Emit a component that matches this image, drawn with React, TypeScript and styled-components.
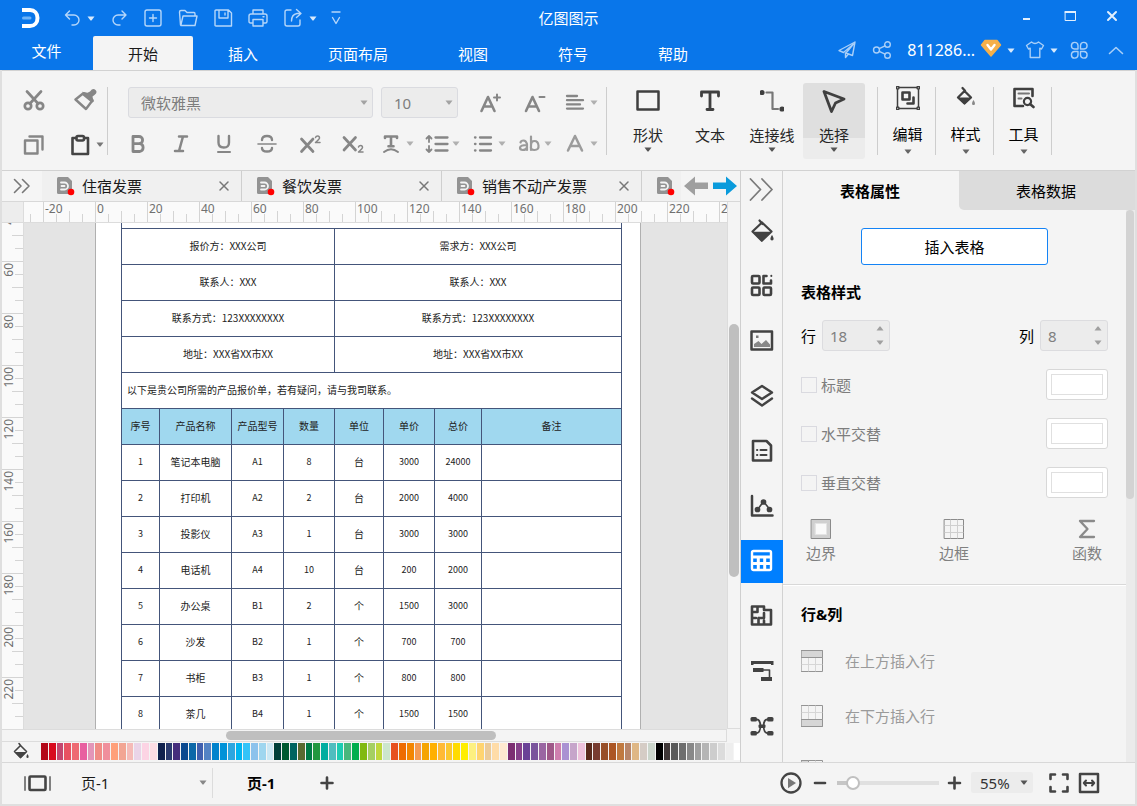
import React from "react";
import styled, { createGlobalStyle, css } from "styled-components";

const GlobalStyle = createGlobalStyle`
  * { box-sizing: border-box; }
  body {
    margin: 0;
    font-family: "Noto Sans", "Noto Sans CJK SC", sans-serif;
    font-size: 15px;
    line-height: 20px;
    color: #1a1a1a;
    background: #f4f4f4;
  }
  button, input, select { font: inherit; color: inherit; margin: 0; }
  button { border: 0; padding: 0; background: none; cursor: pointer; }
`;

/* ---------- icons ---------- */

const Svg = styled.svg<{ $w?: number }>`
  flex: none;
  display: block;
  fill: none;
  stroke: currentColor;
  stroke-width: ${(p) => p.$w ?? 1.4};
  stroke-linecap: round;
  stroke-linejoin: round;
`;

type IconProps = { size?: number; w?: number; children: React.ReactNode };
const Icon = ({ size = 24, w, children }: IconProps) => (
  <Svg width={size} height={size} viewBox={`0 0 ${size} ${size}`} $w={w} aria-hidden="true">
    {children}
  </Svg>
);

const CaretSvg = styled.svg<{ $color?: string }>`
  flex: none;
  display: block;
  fill: ${(p) => p.$color ?? "currentColor"};
  pointer-events: none;
`;
const Caret = ({ color, up }: { color?: string; up?: boolean }) => (
  <CaretSvg width="8" height="5" viewBox="0 0 8 5" $color={color} aria-hidden="true">
    <path d={up ? "M0.5 4.5 L3.5 0.5 H4.5 L7.5 4.5Z" : "M0.5 0.5 H7.5 L4.5 4.5 H3.5Z"} />
  </CaretSvg>
);

const Solid = (props: React.SVGProps<SVGPathElement>) => <path fill="currentColor" stroke="none" {...props} />;

const BucketIcon = () => (
  <Icon w={2.2}>
    <path d="M9.500 1.500 L12.500 5 M12 3.500 L21.500 12.500 L11.800 21.800 L2.500 12.500 L12 3.500" />
    <Solid d="M2.500 12.800 H21.500 L11.800 22.500Z" />
    <Solid d="M22 16 c2.200 3.200 2 5.400 0 5.400 s-2.200 -2.200 0 -5.400Z" />
  </Icon>
);

/* ---------- header ---------- */

const Shell = styled.div`
  height: 100vh;
  min-height: 480px;
  display: flex;
  flex-direction: column;
  overflow: hidden;
  background: #f4f4f4;
`;

const Header = styled.header`
  flex: none;
  background: #0976ea;
  color: #cfe4fb;
`;

const TitleBar = styled.div`
  display: grid;
  grid-template-columns: 1fr auto 1fr;
  align-items: center;
  height: 36px;
`;

const QuickTools = styled.div`
  display: flex;
  align-items: center;
  padding-left: 20px;
`;

const QuickButton = styled.button<{ $gap?: number }>`
  display: flex;
  align-items: center;
  gap: 6px;
  margin-left: ${(p) => p.$gap ?? 15}px;
  color: #b5d6fa;
`;

const AppTitle = styled.h1`
  margin: 0;
  font-size: 15px;
  font-weight: 400;
  color: #fff;
`;

const WindowControls = styled.div`
  display: flex;
  justify-content: flex-end;
  padding: 0 4px 4px 0;
`;

const WindowButton = styled.button`
  display: flex;
  justify-content: center;
  width: 43px;
  color: #e2effd;
`;

const MenuRow = styled.nav`
  display: flex;
  height: 34px;
`;

const FileButton = styled.button`
  width: 93px;
  padding-bottom: 5px;
  color: #fff;
`;

const MenuTab = styled.button<{ $active?: boolean }>`
  padding: 2px 35px 0;
  border-radius: 2px 2px 0 0;
  white-space: nowrap;
  color: ${(p) => (p.$active ? "#1a1a1a" : "#fff")};
  background: ${(p) => (p.$active ? "#f4f4f4" : "none")};
`;

const Account = styled.div`
  display: flex;
  align-items: center;
  margin-left: auto;
  padding: 0 12px 6px 0;
`;

const AccountButton = styled.button<{ $gap?: number }>`
  display: flex;
  align-items: center;
  gap: 5px;
  margin-left: ${(p) => p.$gap ?? 15}px;
  color: #a9cff8;
`;

const UserName = styled.span`
  color: #fff;
  font-size: 16px;
`;

const HeaderBar = () => (
  <Header>
    <TitleBar>
      <QuickTools>
        <Svg width="21" height="22" viewBox="0 0 21 22" aria-hidden="true">
          <path d="M2 3 H10 C14.5 3 17.500 6.500 17.500 11 S14.500 19 10 19 H2" stroke="#fff" strokeWidth="4" strokeLinecap="butt" />
          <path d="M3.500 11 H10" stroke="#6fb3f7" strokeWidth="3" />
        </Svg>
        <QuickButton $gap={22} aria-label="撤销">
          <Icon size={18}><path d="M6.500 2 L2.500 6 L6.500 10 M2.500 6 H11 A5 5 0 0 1 11 16 H9" /></Icon>
          <Caret color="#d8e9fc" />
        </QuickButton>
        <QuickButton aria-label="重做">
          <Icon size={18}><path d="M12 2 L16 6 L12 10 M16 6 H8 A5 5 0 0 0 8 16 H10" /></Icon>
        </QuickButton>
        <QuickButton aria-label="新建">
          <Icon size={20}><rect x="2" y="2" width="16" height="16" rx="2" /><path d="M10 6.500 V13.500 M6.500 10 H13.500" /></Icon>
        </QuickButton>
        <QuickButton aria-label="打开">
          <Icon size={20}><path d="M2.500 17 L1.500 4 Q1.500 2.500 3 2.500 H7 L9 4.500 H16 Q17 4.500 17 6 V8 M2.800 17.500 L5 8 H19 L17 17.500Z" /></Icon>
        </QuickButton>
        <QuickButton aria-label="保存">
          <Icon size={20}><path d="M3 2 H15.500 L18.500 5 V18 H3 Q2 18 2 17 V3 Q2 2 3 2Z M6 2.500 V10 H15 V2.500 M12 5 V7" /></Icon>
        </QuickButton>
        <QuickButton aria-label="打印">
          <Icon size={20}><path d="M5 6 V2 H15 V6 M5 15 H2.500 Q1 15 1 13.500 V8 Q1 6 3 6 H17 Q19 6 19 8 V13.500 Q19 15 17.500 15 H15 M5 11.500 H15 V18 H5Z M15 8.800 H16" /></Icon>
        </QuickButton>
        <QuickButton aria-label="导出">
          <Icon size={20}><path d="M8 2 H4 Q2 2 2 4 V16 Q2 18 4 18 H15 Q17 18 17 16 V12 M13.500 1.500 L18 5.500 L13.500 9.500 M18 5.500 H14 Q8.500 6.500 8.500 13" /></Icon>
          <Caret color="#d8e9fc" />
        </QuickButton>
        <QuickButton $gap={11} aria-label="自定义">
          <Icon size={16}><path d="M4 2 H12 M4.500 7.500 L8 13.500 L11.500 7.500" /></Icon>
        </QuickButton>
      </QuickTools>
      <AppTitle>亿图图示</AppTitle>
      <WindowControls>
        <WindowButton aria-label="最小化"><Icon size={14} w={2}><path d="M4 10 H11" strokeLinecap="butt" /></Icon></WindowButton>
        <WindowButton aria-label="最大化"><Icon size={14} w={1}><rect x="3.500" y="2.500" width="10" height="9" /><path d="M3.500 3 H13.500" strokeWidth="2" /></Icon></WindowButton>
        <WindowButton aria-label="关闭"><Icon size={14} w={2}><path d="M3 3 L11 11 M11 3 L3 11" /></Icon></WindowButton>
      </WindowControls>
    </TitleBar>
    <MenuRow>
      <FileButton>文件</FileButton>
      {["开始", "插入", "页面布局", "视图", "符号", "帮助"].map((t) => (
        <MenuTab key={t} $active={t === "开始"}>{t}</MenuTab>
      ))}
      <Account>
        <AccountButton aria-label="发送"><Icon size={20}><path d="M18 2 L2 10.500 L6.500 12.500 L16.500 4 L9 13 L15.500 15.500 L18 2 M8.500 13 V17.500 L11 14.500" /></Icon></AccountButton>
        <AccountButton aria-label="分享"><Icon size={20}><circle cx="4.500" cy="10" r="3" /><circle cx="15.500" cy="4.500" r="2.800" /><circle cx="15.500" cy="15.500" r="2.800" /><path d="M7.200 8.700 L13 5.800 M7.200 11.300 L13 14.200" /></Icon></AccountButton>
        <AccountButton>
          <UserName>811286...</UserName>
          <Svg width="22" height="24" viewBox="0 0 22 24" aria-hidden="true">
            <path d="M5 2.500 H17 L20.500 7 L11 18 L1.500 7Z" fill="#f5b04a" stroke="#f5b04a" />
            <path d="M7.500 7 L11 11.500 L14.500 7" stroke="#fff" strokeWidth="2.400" />
          </Svg>
          <Caret color="#d8e9fc" />
        </AccountButton>
        <AccountButton $gap={10} aria-label="皮肤">
          <Icon size={20}><path d="M6.500 2 Q10 5 13.500 2 L18.500 5.500 L16.500 9 L14.800 8.200 V17.500 H5.200 V8.200 L3.500 9 L1.500 5.500Z" /></Icon>
          <Caret color="#d8e9fc" />
        </AccountButton>
        <AccountButton $gap={12} aria-label="应用"><Icon size={18}><path d="M8 8 H4.500 A3.300 3.300 0 1 1 8 4.500Z M10.500 8 V4.500 A3.300 3.300 0 1 1 14 8Z M8 10.500 V14 A3.300 3.300 0 1 1 4.500 10.500Z M10.500 10.500 H14 A3.300 3.300 0 1 1 10.500 14Z" /></Icon></AccountButton>
        <AccountButton $gap={19} aria-label="收起"><Icon size={18} w={1.6}><path d="M2.500 12.500 L9 6.500 L15.500 12.500" /></Icon></AccountButton>
      </Account>
    </MenuRow>
  </Header>
);

/* ---------- ribbon ---------- */

const Frame = styled.div`
  flex: 1;
  min-height: 0;
  display: flex;
  flex-direction: column;
  border: solid #dfdfdf;
  border-width: 0 2px 2px;
`;

const Ribbon = styled.section`
  flex: none;
  display: flex;
  height: 101px;
  border: solid #d2d2d2;
  border-width: 1px 0;
`;

const Separator = styled.div`
  flex: none;
  align-self: flex-start;
  width: 1px;
  height: 68px;
  margin-top: 16px;
  background: #cdcdcd;
`;

const ClipboardGroup = styled.div`
  display: grid;
  grid-template-columns: 63px 42px;
  grid-auto-rows: 45px;
  padding-top: 6px;
  align-items: center;
`;

const ToolButton = styled.button<{ $strong?: boolean }>`
  display: flex;
  align-items: center;
  justify-content: center;
  gap: 3px;
  color: ${(p) => (p.$strong ? "#444" : "#868686")};
`;

const FontGroup = styled.div`
  display: flex;
  flex-direction: column;
  padding: 11px 8px 0;
`;

const FontRow = styled.div<{ $inset?: number }>`
  display: flex;
  align-items: center;
  height: 41px;
  padding-left: ${(p) => p.$inset ?? 0}px;
`;

const GlyphButton = styled(ToolButton)<{ $width?: number }>`
  width: ${(p) => p.$width ?? 43}px;
`;

const SplitButton = styled(ToolButton)<{ $width?: number }>`
  width: ${(p) => p.$width ?? 46}px;
  justify-content: flex-end;
`;

const SelectBox = styled.div<{ $width: number }>`
  flex: none;
  display: grid;
  grid-template-columns: 1fr 13px;
  align-items: center;
  width: ${(p) => p.$width}px;
  & > * { grid-row: 1; }
  & > svg { grid-column: 2; }
`;

const Select = styled.select<{ $plain?: boolean }>`
  grid-column: 1 / 3;
  appearance: none;
  width: 100%;
  height: 31px;
  padding: 0 12px;
  outline: none;
  border: 1px solid #dadbe0;
  border-radius: 3px;
  background: #ececec;
  color: #7d7d7d;
  ${(p) => p.$plain && css`
    border: 0;
    background: none;
    color: #1a1a1a;
  `}
`;

const BigButton = styled.button<{ $active?: boolean }>`
  display: flex;
  flex-direction: column;
  align-items: center;
  align-self: flex-start;
  width: 62px;
  height: 76px;
  margin-top: 12px;
  padding-top: 6px;
  border-radius: 3px;
  color: #3f3f3f;
  background: ${(p) => (p.$active ? "linear-gradient(#dfdfdf 55px, #ececec 55px)" : "none")};
`;

const BigLabel = styled.span`
  margin: 10px 0 0;
  line-height: 24px;
  white-space: nowrap;
  color: #262626;
`;

const BigTools = styled.div`
  display: flex;
  padding: 0 12px 0 10px;
`;

const MenuButton = styled.button`
  display: flex;
  flex-direction: column;
  align-items: center;
  align-self: flex-start;
  width: 57px;
  margin-top: 15px;
  padding-left: 2px;
  color: #3f3f3f;
`;

const MenuLabel = styled.span`
  margin: 12px 0 3px;
  line-height: 24px;
  color: #000;
`;

const RibbonBar = () => (
  <Ribbon>
    <ClipboardGroup>
      <ToolButton aria-label="剪切">
        <Icon w={2.700}><circle cx="6" cy="18" r="3.200" /><circle cx="18" cy="18" r="3.200" /><path d="M5 3.500 L16 15.500 M19 3.500 L8 15.500" /></Icon>
      </ToolButton>
      <ToolButton aria-label="格式刷">
        <Icon w={2.400}>
          <Solid d="M16 3.500 Q19 -0.500 21.500 2 T20.500 7 L18.500 8.500 L19.500 14 L8 3.800 L13.500 4.800Z" />
          <path d="M9 5.500 L1.500 11.500 L12 21 L18 13" /><path d="M10 6 L18 12.500" strokeWidth="3.600" />
        </Icon>
      </ToolButton>
      <ToolButton aria-label="复制">
        <Icon w={2.400}><rect x="3" y="7.500" width="12.500" height="13" /><path d="M7.500 3.500 H20.500 V16.500" /></Icon>
      </ToolButton>
      <ToolButton $strong aria-label="粘贴">
        <Icon w={2.600}><path d="M7 5 H3.500 V21 H19 V5 H16" /><rect x="7.500" y="3" width="7.500" height="4.500" rx="1.500" /></Icon>
        <Caret color="#777" />
      </ToolButton>
    </ClipboardGroup>
    <Separator />
    <FontGroup>
      <FontRow $inset={12}>
        <SelectBox $width={245}>
          <Select aria-label="字体"><option>微软雅黑</option></Select>
          <Caret color="#a3a3a3" />
        </SelectBox>
        <FontRow $inset={8}>
          <SelectBox $width={77}>
            <Select aria-label="字号"><option>10</option></Select>
            <Caret color="#a3a3a3" />
          </SelectBox>
        </FontRow>
        <FontRow $inset={10}>
          <GlyphButton $width={44} aria-label="增大字号"><Icon w={2.600}><path d="M3.500 20 L10 6 L16.500 20 M6 15.500 H14" /><path strokeWidth="2" d="M16 6.500 H22 M19 3.500 V9.500" /></Icon></GlyphButton>
          <GlyphButton $width={44} aria-label="减小字号"><Icon w={2.600}><path d="M4 20 L10.500 6 L17 20 M6.500 15.500 H14.500" /><path strokeWidth="2" d="M17.500 6 H22.500" /></Icon></GlyphButton>
          <SplitButton $width={42} aria-label="对齐"><Icon w={2.300}><path d="M4 5 H14 M4 9.200 H20 M4 13.400 H17 M4 17.600 H20" /></Icon><Caret color="#b0b0b0" /></SplitButton>
        </FontRow>
      </FontRow>
      <FontRow>
        <GlyphButton aria-label="加粗"><Icon w={2.800}><path d="M7 4.500 H13 A3.600 3.600 0 0 1 13 11.700 H7 M7 11.700 H14 A4 4 0 0 1 14 19.500 H7 V4.500" /></Icon></GlyphButton>
        <GlyphButton aria-label="斜体"><Icon w={2.500}><path d="M10 4.500 H18 M6 19 H14 M14 4.500 L10 19" /></Icon></GlyphButton>
        <GlyphButton aria-label="下划线"><Icon w={2.400}><path d="M6.500 4 V10.500 Q6.500 15.500 11.800 15.500 T17 10.500 V4" /><path strokeWidth="2" d="M6 20 H18" /></Icon></GlyphButton>
        <GlyphButton aria-label="删除线"><Icon w={2.400}><path d="M17 8 Q17 4 12 4 T7 8 M7 16 Q7 19.500 12 19.500 T17 16" /><path strokeWidth="1.600" d="M3 12 H21" /></Icon></GlyphButton>
        <GlyphButton aria-label="上标"><Icon w={2.700}><path d="M3.500 7 L15 19.500 M15 7 L3.500 19.500" /><path strokeWidth="1.500" d="M17.500 5.500 Q18 4 19.700 4 T21.500 6 Q21.500 7 17.500 10.500 H22" /></Icon></GlyphButton>
        <GlyphButton aria-label="下标"><Icon w={2.700}><path d="M3 5.500 L14.500 18 M14.500 5.500 L3 18" /><path strokeWidth="1.500" d="M17.500 15 Q18 13.500 19.700 13.500 T21.500 15.500 Q21.500 16.500 17.500 20 H22" /></Icon></GlyphButton>
        <SplitButton $width={40} aria-label="文字方向"><Icon w={2.600}><path d="M6 6 V4.500 H18 V6 M12 4.500 V14 M9.500 14.300 H14.500" /><path d="M5 20 Q12 14.500 19 20" strokeWidth="2" /></Icon><Caret color="#b0b0b0" /></SplitButton>
        <SplitButton aria-label="行距"><Icon w={2.300}><path d="M10.500 5.500 H22.500 M10.500 12 H22.500 M10.500 18.500 H22.500" /><path strokeWidth="1.800" d="M4 4 V10 M1.500 6.500 L4 4 L6.500 6.500 M4 14 V20 M1.500 17.500 L4 20 L6.500 17.500" /></Icon><Caret color="#b0b0b0" /></SplitButton>
        <SplitButton aria-label="列表"><Icon w={2.300}><path d="M9 5.500 H20 M9 12 H20 M9 18.500 H20 M4 5.500 H4.500 M4 12 H4.500 M4 18.500 H4.500" /></Icon><Caret color="#b0b0b0" /></SplitButton>
        <SplitButton aria-label="大小写"><Icon w={2.200}><path stroke="#9a9a9a" d="M3.500 10.500 Q4 8.500 6.500 8.500 T10 12 V18 M10 13 Q3 13 3 15.800 Q3 18 5.800 18 Q9 18 10 15.500 M14 4.500 V18 M14 13.500 Q14 9 17.500 9 T21.500 13.500 T17.500 18 T14 13.500" /></Icon><Caret color="#b0b0b0" /></SplitButton>
        <SplitButton aria-label="字体颜色"><Icon w={2.500}><path d="M5 18.500 L12 4 L19 18.500 M7.500 14 H16.500" stroke="#9c9c9c" /></Icon><Caret color="#b0b0b0" /></SplitButton>
      </FontRow>
    </FontGroup>
    <Separator />
    <BigTools>
      <BigButton>
        <Icon w={2.500}><rect x="1.500" y="2.500" width="21" height="18" /></Icon>
        <BigLabel>形状</BigLabel><Caret color="#555" />
      </BigButton>
      <BigButton>
        <Icon w={2.800}><path d="M3.500 7 V3 H20.500 V7 M12 3 V20.500 M9 20.500 H15" /></Icon>
        <BigLabel>文本</BigLabel>
      </BigButton>
      <BigButton>
        <Icon w={2.200}><circle cx="2" cy="3.500" r="1.500" fill="currentColor" /><circle cx="22" cy="20" r="1.500" fill="currentColor" /><path stroke="#777" d="M6.500 3.500 H12.500 V20 H18" /></Icon>
        <BigLabel>连接线</BigLabel><Caret color="#555" />
      </BigButton>
      <BigButton $active>
        <Icon w={2.800}><path d="M2 2.500 L22 10 L13.500 14 L9.500 22.500Z" /></Icon>
        <BigLabel>选择</BigLabel><Caret color="#555" />
      </BigButton>
    </BigTools>
    <Separator />
    <MenuButton>
      <Icon w={1.500}>
        <rect x="1.500" y="1.500" width="21" height="21" />
        <path strokeWidth="2.600" d="M6.500 6.500 H13.500 V13.500 H6.500Z M17.500 11.500 V17.500 H11.500" />
        {[[1.7, 1.7], [22.3, 1.7], [1.7, 22.3], [22.3, 22.3]].map(([x, y]) => <circle key={`${x}-${y}`} cx={x} cy={y} r="1.300" fill="#fff" />)}
      </Icon>
      <MenuLabel>编辑</MenuLabel><Caret color="#666" />
    </MenuButton>
    <Separator />
    <MenuButton>
      <Icon w={2.300}>
        <path d="M8.500 2 L11 4.800 M10.500 5 L17 11.500 L10.500 17.500 L4 11.500Z" />
        <Solid d="M4 11.500 H17 L10.500 18.500Z" /><Solid fill="#888" d="M19.500 14 c2 3 1.800 5 0 5 s-2 -2 0 -5Z" />
      </Icon>
      <MenuLabel>样式</MenuLabel><Caret color="#666" />
    </MenuButton>
    <Separator />
    <MenuButton>
      <Icon w={2.600}>
        <path d="M11 20 H2.500 V3 H20.500 V10 M18 18 L21.500 21" /><circle cx="15.500" cy="15.500" r="3.600" strokeWidth="2.200" />
        <path stroke="#777" strokeWidth="2" d="M6.500 7.500 H17 M6.500 12.500 H9.500" />
      </Icon>
      <MenuLabel>工具</MenuLabel><Caret color="#666" />
    </MenuButton>
    <Separator />
  </Ribbon>
);

/* ---------- editor ---------- */

const Main = styled.main`
  flex: 1;
  min-height: 0;
  display: flex;
  border-bottom: 1px solid #d8d8d8;
`;

const Editor = styled.section`
  flex: 1;
  min-width: 0;
  display: flex;
  flex-direction: column;
  border-right: 1px solid #cfcfcf;
`;

const TabStrip = styled.div`
  flex: none;
  display: flex;
  height: 31px;
  overflow: hidden;
  border-bottom: 1px solid #d8d8d8;
  background: #f0f0f0;
`;

const StripToggle = styled.button`
  flex: none;
  display: flex;
  align-items: center;
  justify-content: center;
  width: 40px;
  background: #f5f5f5;
  color: #777;
`;

const DocTabs = styled.div`
  flex: 1;
  display: flex;
  min-width: 0;
  overflow: hidden;
`;

const DocTab = styled.div`
  flex: none;
  display: flex;
  align-items: center;
  width: 200px;
  padding: 0 11px 0 14px;
  border-right: 1px solid #cfcfcf;
`;

const DocName = styled.button`
  flex: 1;
  margin-left: 6px;
  text-align: left;
  white-space: nowrap;
`;

const CloseButton = styled.button`
  color: #777;
`;

const StripArrows = styled.div`
  flex: none;
  display: flex;
  align-items: center;
  gap: 5px;
  width: 59px;
  padding-left: 3px;
  background: #f4f4f4;
`;

const ArrowButton = styled.button<{ $color: string }>`
  color: ${(p) => p.$color};
`;

const Work = styled.div`
  flex: 1;
  min-height: 0;
  display: grid;
  grid-template-columns: 22px minmax(0, 1fr) 13px;
  grid-template-rows: 21px minmax(0, 1fr) 13px;
`;

const Corner = styled.div`
  background: #ededed;
  border: solid #dcdcdc;
  border-width: 0 1px 1px 0;
`;

const TopRuler = styled.div`
  display: flex;
  overflow: hidden;
  background: #fafafa;
  border-bottom: 1px solid #dcdcdc;
`;

const TopStep = styled.div`
  flex: none;
  width: 52px;
  padding-left: 1px;
  border-left: 1px solid #d4d4d4;
  font-size: 12px;
  line-height: 14px;
  color: #707070;
  background:
    linear-gradient(#d4d4d4, #d4d4d4) 12px 100% / 1px 8px no-repeat,
    linear-gradient(#d4d4d4, #d4d4d4) 25px 100% / 1px 11px no-repeat,
    linear-gradient(#d4d4d4, #d4d4d4) 38px 100% / 1px 8px no-repeat;
  &:first-child { margin-left: -33px; }
`;

const SideRuler = styled.div`
  display: flex;
  flex-direction: column;
  overflow: hidden;
  background: #fafafa;
  border-right: 1px solid #dcdcdc;
`;

const SideStep = styled.div`
  flex: none;
  height: 52px;
  padding-top: 1px;
  border-top: 1px solid #d4d4d4;
  font-size: 12px;
  line-height: 14px;
  color: #707070;
  background:
    linear-gradient(#d4d4d4, #d4d4d4) 100% 12px / 8px 1px no-repeat,
    linear-gradient(#d4d4d4, #d4d4d4) 100% 25px / 11px 1px no-repeat,
    linear-gradient(#d4d4d4, #d4d4d4) 100% 38px / 8px 1px no-repeat;
  &:first-child { margin-top: -14px; }
`;

const SideLabel = styled.span`
  display: block;
  width: 15px;
  writing-mode: vertical-rl;
  transform: rotate(180deg);
  text-align: end;
`;

const Canvas = styled.div`
  display: flex;
  overflow: hidden;
  background: #e4e4e4;
`;

const Page = styled.article`
  flex: none;
  width: 546px;
  margin-left: 71px;
  padding-left: 25px;
  background: #fff;
  border: solid #b0b0b0;
  border-width: 0 1px;
`;

const QuoteTable = styled.table`
  table-layout: fixed;
  width: 501px;
  border-collapse: collapse;
  font-family: "Liberation Sans Narrow", "Noto Sans CJK SC", sans-serif;
  font-size: 10px;
  line-height: 14px;
  color: #222;
`;

const Cell = styled.td<{ $left?: boolean; $open?: boolean; $code?: boolean }>`
  height: ${(p) => (p.$open ? 5 : 36)}px;
  padding: 0 ${(p) => (p.$left ? 5 : 0)}px;
  border: 1px solid #44557a;
  ${(p) => p.$open && "border-top: 0;"}
  ${(p) => p.$code && "font-size: 9px;"}
  text-align: ${(p) => (p.$left ? "left" : "center")};
`;

const HeadCell = styled.th`
  height: 36px;
  padding: 0;
  border: 1px solid #44557a;
  background: #a0d8ef;
  font-weight: 400;
`;

const VTrack = styled.div`
  grid-row: 1 / 3;
  grid-column: 3;
  padding: 122px 1px 0;
  border: solid #dcdcdc;
  border-width: 0 0 1px 1px;
`;

const VThumb = styled.div`
  height: 253px;
  border-radius: 5px;
  background: #bfbfbf;
`;

const HTrack = styled.div`
  grid-column: 1 / 3;
  padding: 1px 0 1px 224px;
  border: solid #dcdcdc;
  border-width: 1px 1px 1px 0;
`;

const HThumb = styled.div`
  width: 270px;
  height: 9px;
  border-radius: 5px;
  background: #bfbfbf;
`;

const PaletteRow = styled.div`
  flex: none;
  display: flex;
  align-items: center;
  height: 20px;
  padding-bottom: 2px;
`;

const PaletteButton = styled.button`
  flex: none;
  display: flex;
  justify-content: center;
  width: 39px;
  color: #444;
`;

const Swatches = styled.div`
  flex: 1;
  display: flex;
  gap: 1px;
  height: 17px;
`;

const Swatch = styled.button`
  flex: 1;
  min-width: 0;
`;

const palette = (
  "b30818 d80a1e c4476f e85262 ee6a72 e85fa0 e395b8 f08c86 f08f9c ffa07a f2a593 f5bbb8 ead4e8 fcd4e4 fddde4 " +
  "10214d 2a3a6e 452d7c 0b4a90 0c68a8 4060ae 5383c4 0082cc 0092d8 2ca6e0 00b4f0 33c4f8 8cc2ec 9fd6ef cce8f4 " +
  "00403a 005a30 006460 5a6a30 007a45 22973f 00ada0 4fbdbf 1dccb2 48b77c 00ae4e 80b910 a5cf62 bfd83c cce6cc " +
  "e7501e ee6c00 f38600 f59a50 f5a400 ffb000 ffba35 fbc830 ffdb00 ffee00 fdf080 ffd470 eccb98 ffdca8 ffe9d0 " +
  "7c2f72 86408a 6a4196 7a549c 9a66a2 9f5888 cf7fae aa92d2 c6a5ca eec2dc " +
  "5a2a1c 783c30 984f28 ac5624 c0793f b88568 dfb785 d5ccc5 cbd5cb " +
  "000000 3e3636 5a5a5a 6e6e6e 888888 a0a0a0 b5b5b5 cdcdcd dcdcdc eeeeee ffffff"
).split(" ");

const FileIcon = () => (
  <Svg width="20" height="20" viewBox="0 0 20 20" aria-hidden="true">
    <path d="M2.500 1 H12 L16 5 V18 H2.500 Q1 18 1 16.500 V2.500 Q1 1 2.500 1Z" fill="#939393" stroke="none" />
    <path d="M5 6.500 H8.500 A3.500 3.500 0 0 1 8.500 13.500 H5 M5.500 10 H8.500" stroke="#f3f3f3" strokeWidth="1.800" />
    <circle cx="15" cy="16" r="3.300" fill="#f00" stroke="none" />
  </Svg>
);

const infoRows = [
  ["报价方：XXX公司", "需求方：XXX公司"],
  ["联系人：XXX", "联系人：XXX"],
  ["联系方式：123XXXXXXXX", "联系方式：123XXXXXXXX"],
  ["地址：XXX省XX市XX", "地址：XXX省XX市XX"],
];
const columns: [string, number][] = [
  ["序号", 38], ["产品名称", 72], ["产品型号", 52], ["数量", 51], ["单位", 49], ["单价", 51], ["总价", 47], ["备注", 140],
];
const products = [
  ["1", "笔记本电脑", "A1", "8", "台", "3000", "24000", ""],
  ["2", "打印机", "A2", "2", "台", "2000", "4000", ""],
  ["3", "投影仪", "A3", "1", "台", "3000", "3000", ""],
  ["4", "电话机", "A4", "10", "台", "200", "2000", ""],
  ["5", "办公桌", "B1", "2", "个", "1500", "3000", ""],
  ["6", "沙发", "B2", "1", "个", "700", "700", ""],
  ["7", "书柜", "B3", "1", "个", "800", "800", ""],
  ["8", "茶几", "B4", "1", "个", "1500", "1500", ""],
];

const topMarks = Array.from({ length: 15 }, (_, i) => i * 20 - 40);
const sideMarks = Array.from({ length: 10 }, (_, i) => i * 20 + 40);

const EditorPane = () => (
  <Editor>
    <TabStrip>
      <StripToggle aria-label="展开"><Icon w={1.600}><path d="M4.500 5.500 L11 12 L4.500 18.500 M12.500 5.500 L19 12 L12.500 18.500" /></Icon></StripToggle>
      <DocTabs>
        {["住宿发票", "餐饮发票", "销售不动产发票", ""].map((name) => (
          <DocTab key={name}>
            <FileIcon />
            <DocName aria-label={name || "未命名"}>{name}</DocName>
            <CloseButton aria-label="关闭"><Icon size={12} w={1.500}><path d="M2 2 L10 10 M10 2 L2 10" /></Icon></CloseButton>
          </DocTab>
        ))}
      </DocTabs>
      <StripArrows>
        <ArrowButton $color="#9f9f9f" aria-label="上一个"><Icon><Solid d="M0 12 L11 2.500 V8.500 H24 V15 H11 V21.500Z" /></Icon></ArrowButton>
        <ArrowButton $color="#0a9bdc" aria-label="下一个"><Icon><Solid d="M24 12 L13 2.500 V8.500 H0 V15 H13 V21.500Z" /></Icon></ArrowButton>
      </StripArrows>
    </TabStrip>
    <Work>
      <Corner />
      <TopRuler>{topMarks.map((m) => <TopStep key={m}>{m > -40 && m}</TopStep>)}</TopRuler>
      <VTrack><VThumb /></VTrack>
      <SideRuler>{sideMarks.map((m) => <SideStep key={m}><SideLabel>{m}</SideLabel></SideStep>)}</SideRuler>
      <Canvas>
        <Page>
          <QuoteTable>
            <colgroup>{columns.map(([name, w]) => <col key={name} width={w} />)}</colgroup>
            <tbody>
              <tr><Cell $open colSpan={8} /></tr>
              {infoRows.map(([a, b]) => (
                <tr key={a}><Cell colSpan={4}>{a}</Cell><Cell colSpan={4}>{b}</Cell></tr>
              ))}
              <tr><Cell $left colSpan={8}>以下是贵公司所需的产品报价单，若有疑问，请与我司联系。</Cell></tr>
              <tr>{columns.map(([name]) => <HeadCell key={name} scope="col">{name}</HeadCell>)}</tr>
              {products.map((row) => (
                <tr key={row[0]}>{row.map((c, i) => <Cell key={i} $code={/^\w+$/.test(c)}>{c}</Cell>)}</tr>
              ))}
            </tbody>
          </QuoteTable>
        </Page>
      </Canvas>
      <HTrack><HThumb /></HTrack>
    </Work>
    <PaletteRow>
      <PaletteButton aria-label="填充颜色">
        <Icon size={18} w={1.600}>
          <path d="M6 1.500 L8 4 M7.500 3.500 L13.500 9.500 L7.500 15.500 L1.500 9.500Z" />
          <Solid d="M1.500 10 H13.800 L7.500 16.500Z" /><Solid d="M14.500 12 c1.500 2 1.500 4 0 4 s-1.500 -2 0 -4Z" />
        </Icon>
      </PaletteButton>
      <Swatches>
        {palette.map((c) => <Swatch key={c} aria-label={`#${c}`} style={{ background: `#${c}` }} />)}
      </Swatches>
    </PaletteRow>
  </Editor>
);

/* ---------- tool rail ---------- */

const Rail = styled.nav`
  flex: none;
  display: flex;
  flex-direction: column;
  width: 42px;
  overflow: hidden;
  background: linear-gradient(#d2d2d2, #d2d2d2) 100% 0 / 1px 100% no-repeat;
`;

const RailToggle = styled.button`
  display: flex;
  justify-content: center;
  align-items: center;
  flex: none;
  height: 39px;
  padding: 0 2px 4px 0;
  color: #7a7a7a;
`;

const RailButton = styled.button<{ $active?: boolean }>`
  flex: none;
  display: flex;
  align-items: center;
  justify-content: center;
  width: 42px;
  height: 43px;
  margin-bottom: 12px;
  padding: 0 1px 1px 0;
  color: ${(p) => (p.$active ? "#fff" : "#424242")};
  background: ${(p) => (p.$active ? "#007fff" : "none")};
`;

const ToolRail = () => (
  <Rail>
    <RailToggle aria-label="收起面板"><Icon w={1.800}><path d="M1.500 2 L11.500 12.500 L1.500 23 M13 2 L23 12.500 L13 23" /></Icon></RailToggle>
    <RailButton aria-label="填充"><BucketIcon /></RailButton>
    <RailButton aria-label="符号"><Icon w={2.600}><rect x="2" y="2" width="7.500" height="7.500" rx="1" /><path d="M16.500 2 H13.500 V9.500 H21 V6.500" /><rect x="2" y="13.500" width="7.500" height="7.500" rx="1" /><rect x="13.500" y="13.500" width="7.500" height="7.500" rx="1" /><path d="M21.300 1.800 V2" strokeWidth="2" /></Icon></RailButton>
    <RailButton aria-label="图片"><Icon w={2.500}><rect x="1.500" y="2.500" width="20.500" height="18" /><Solid fill="#888" d="M4 18 V15 L8.500 12 L11.500 15 L16 11 L20 15.500 V18Z" /><Solid fill="#777" d="M6 6.500 H8.500 V9 H6Z" /></Icon></RailButton>
    <RailButton aria-label="图层"><Icon w={2.400}><path d="M12 2 L22 8.500 L12 15 L2 8.500Z M2 14.500 L12 21.500 L22 14.500" /></Icon></RailButton>
    <RailButton aria-label="文档"><Icon w={2.600}><path d="M3 2 H16.500 L21 6.500 V21.500 H3Z" /><path strokeWidth="2" d="M10.500 11 H16.500 M10.500 16 H16.500 M7 11 H7.300 M7 16 H7.300" /></Icon></RailButton>
    <RailButton aria-label="图表"><Icon w={2.500}><path d="M2 2 V21.500 H22.500" /><path strokeWidth="1.600" d="M8 15 L13.500 7.500 L19.500 15" /><circle cx="13.500" cy="8" r="1.600" fill="currentColor" /><circle cx="7.500" cy="15.500" r="1.600" fill="currentColor" /><circle cx="19.500" cy="15.500" r="1.600" fill="currentColor" /></Icon></RailButton>
    <RailButton $active aria-label="表格"><Icon w={2.400}><rect x="2" y="2" width="19" height="19" rx="1.500" /><path d="M3 8 H20.500 M3 14.500 H20.500 M8.300 8 V20.500 M14.700 8 V20.500" strokeWidth="3" /></Icon></RailButton>
    <RailButton aria-label="平面图"><Icon w={2.600}><path d="M2 2.500 H14 V6 H21 V20.500 H2Z M7.500 3 V8 H2.500 M2.500 14 H6 M9 14 H14 V9 M14 16.500 V20 M8.500 14 V20" /></Icon></RailButton>
    <RailButton aria-label="甘特图"><Icon w={1.600}><Solid d="M1 2 H23.500 V6 H21 V5 H3.500 V6 H1Z" /><Solid d="M3 9 H13.500 V13 H3Z M11 18 H22 V22 H11Z" /><path d="M13 11 H19.500 V18" /></Icon></RailButton>
    <RailButton aria-label="思维导图">
      <Icon w={1.800}>
        {[[0.5, 3], [17, 3], [0.5, 17], [17, 17]].map(([x, y]) => <rect key={`${x}-${y}`} x={x} y={y} width="6.500" height="4.500" rx="1.500" fill="currentColor" stroke="none" />)}
        <rect x="8.500" y="10.500" width="7" height="3.500" rx="1" fill="currentColor" stroke="none" />
        <path d="M7 5.500 Q10 5.500 10.500 12 M17 5.500 Q14 5.500 13.500 12 M7 19 Q10 19 10.500 12 M17 19 Q14 19 13.500 12" />
      </Icon>
    </RailButton>
  </Rail>
);

/* ---------- properties panel ---------- */

const Panel = styled.aside`
  flex: none;
  width: 352px;
  display: flex;
  flex-direction: column;
`;

const PanelTabs = styled.div`
  flex: none;
  display: grid;
  grid-template-columns: 1fr 1fr;
  height: 39px;
`;

const PanelTab = styled.button<{ $active?: boolean }>`
  padding-right: 2px;
  font-weight: ${(p) => (p.$active ? 700 : 400)};
  color: #000;
  background: ${(p) => (p.$active ? "none" : "#dcdcdc")};
  border-radius: 0 0 0 5px;
`;

const PanelBody = styled.div`
  flex: 1;
  min-height: 0;
  display: flex;
  overflow: hidden;
`;

const PanelContent = styled.div`
  flex: 1;
  padding-top: 18px;
`;

const PanelTrack = styled.div`
  flex: none;
  width: 9px;
  background: #ebebeb;
`;

const PanelThumb = styled.div`
  height: 289px;
  width: 8px;
  border-radius: 4px;
  background: #d3d3d3;
`;

const Section = styled.section`
  display: flex;
  flex-direction: column;
  padding: 0 18px;
`;

const InsertButton = styled.button`
  align-self: center;
  width: 187px;
  height: 37px;
  border: 1px solid #1483f5;
  border-radius: 3px;
  background: #fff;
  color: #000;
`;

const SectionTitle = styled.h2<{ $loose?: boolean }>`
  margin: ${(p) => (p.$loose ? "19px 0 25px" : "17px 0 18px")};
  font-size: 15px;
  line-height: 20px;
  font-weight: 700;
  color: #000;
`;

const SizeRow = styled.div`
  display: flex;
  justify-content: space-between;
`;

const NumberField = styled.label`
  display: flex;
  align-items: center;
  gap: 6px;
  color: #000;
`;

const NumberBox = styled.span`
  display: flex;
  align-items: center;
  width: 68px;
  height: 31px;
  padding-right: 5px;
  border: 1px solid #dcdcdf;
  border-radius: 3px;
  background: #ececec;
`;

const NumberInput = styled.input`
  flex: 1;
  min-width: 0;
  padding: 0 0 0 7px;
  border: 0;
  outline: none;
  background: none;
  color: #808080;
  appearance: textfield;
  &::-webkit-inner-spin-button { appearance: none; }
`;

const Spinner = styled.span`
  display: grid;
  gap: 9px;
`;

const OptionRow = styled.div`
  display: flex;
  align-items: center;
  justify-content: space-between;
  margin-top: 18px;
`;

const CheckLabel = styled.label`
  display: flex;
  align-items: center;
  gap: 4px;
  color: #7d7d7d;
`;

const Checkbox = styled.input`
  appearance: none;
  width: 16px;
  height: 16px;
  border: 1px solid #dadae0;
`;

const ColorButton = styled.button`
  display: flex;
  width: 62px;
  height: 31px;
  padding: 4px;
  border: 1px solid #d8d8d8;
  border-radius: 3px;
  background: #fff;
`;

const ColorFill = styled.span`
  flex: 1;
  align-self: stretch;
  border: 1px solid #e0e0e0;
`;

const ActionRow = styled.div`
  display: flex;
  justify-content: space-between;
  margin: 19px 6px 21px 5px;
`;

const Action = styled.button`
  display: flex;
  flex-direction: column;
  align-items: center;
  gap: 2px;
  color: #808080;
`;

const Rule = styled.hr`
  margin: 0;
  border: solid #d8d8d8;
  border-width: 1px 0 0;
  box-shadow: 0 1px 0 #fff;
`;

const RowAction = styled.button`
  display: flex;
  align-items: center;
  gap: 21px;
  height: 24px;
  margin-bottom: 31px;
  color: #9a9a9a;
`;

const Grid = ({ band }: { band: string }) => (
  <Icon size={23} w={1}>
    <rect x="0.500" y="0.500" width="21" height="21" fill="#f4f4f4" stroke="#949494" />
    <path stroke="#d6d6d6" d="M7.500 1 V21 M14.500 1 V21 M1 7.500 H21 M1 14.500 H21" />
    <path stroke="#949494" fill="#d6d6d6" d={band} />
  </Icon>
);

const PropertiesPanel = () => (
  <Panel>
    <PanelTabs>
      <PanelTab $active>表格属性</PanelTab>
      <PanelTab>表格数据</PanelTab>
    </PanelTabs>
    <PanelBody>
      <PanelContent>
        <Section>
          <InsertButton>插入表格</InsertButton>
          <SectionTitle>表格样式</SectionTitle>
          <SizeRow>
            {[["行", 18], ["列", 8]].map(([name, value]) => (
              <NumberField key={name}>
                {name}
                <NumberBox>
                  <NumberInput type="number" defaultValue={value} />
                  <Spinner><Caret up color="#a0a0a0" /><Caret color="#a0a0a0" /></Spinner>
                </NumberBox>
              </NumberField>
            ))}
          </SizeRow>
          {["标题", "水平交替", "垂直交替"].map((name) => (
            <OptionRow key={name}>
              <CheckLabel><Checkbox type="checkbox" />{name}</CheckLabel>
              <ColorButton aria-label={`${name}颜色`}><ColorFill /></ColorButton>
            </OptionRow>
          ))}
          <ActionRow>
            <Action>
              <Icon w={1}><rect x="2.500" y="2.500" width="19" height="19" fill="#d0d0d0" stroke="#8a8a8a" /><rect x="6.500" y="6.500" width="11" height="11" fill="#fafafa" stroke="#e4e4e4" /></Icon>
              边界
            </Action>
            <Action>
              <Icon w={1}><rect x="2.500" y="2.500" width="19" height="19" stroke="#8a8a8a" /><path stroke="#cfcfcf" d="M8.500 3 V21 M15.500 3 V21 M3 8.500 H21 M3 15.500 H21" /></Icon>
              边框
            </Action>
            <Action>
              <Icon w={2.300}><path stroke="#8a8a8a" d="M19 4 V4 H5 L12.500 12 L5 20 H19" /></Icon>
              函数
            </Action>
          </ActionRow>
        </Section>
        <Rule />
        <Section>
          <SectionTitle $loose>行&amp;列</SectionTitle>
          <RowAction><Grid band="M0.500 0.500 H21.500 V7.500 H0.500Z" />在上方插入行</RowAction>
          <RowAction><Grid band="M0.500 14.500 H21.500 V21.500 H0.500Z" />在下方插入行</RowAction>
          <RowAction aria-label="在左侧插入列"><Grid band="M0.500 0.500 H7.500 V21.500 H0.500Z" /></RowAction>
        </Section>
      </PanelContent>
      <PanelTrack><PanelThumb /></PanelTrack>
    </PanelBody>
  </Panel>
);

/* ---------- status bar ---------- */

const StatusBar = styled.footer`
  flex: none;
  display: flex;
  align-items: center;
  height: 41px;
  padding: 0 34px 2px 20px;
`;

const StatusButton = styled.button`
  display: flex;
  color: #444;
`;

const PageSelectBox = styled(SelectBox)`
  margin-left: 17px;
`;

const StatusRule = styled.div`
  width: 1px;
  height: 30px;
  background: #dcdcdc;
`;

const PageTab = styled.button`
  padding: 0 40px 0 34px;
  font-weight: 700;
  color: #000;
`;

const ZoomGroup = styled.div`
  display: flex;
  align-items: center;
  margin-left: auto;
  gap: 6px;
`;

const ZoomSlider = styled.input`
  appearance: none;
  width: 102px;
  height: 14px;
  background: linear-gradient(90deg, #c6c6c6 16px, #e0e0e0 16px) center / 100% 4px no-repeat;
  && { margin-right: 2px; }
  &::-webkit-slider-thumb {
    appearance: none;
    width: 14px;
    height: 14px;
    border: 2px solid #c0c0c0;
    border-radius: 50%;
    background: #fff;
  }
`;

const ZoomSelectBox = styled(SelectBox)`
  margin: 0 8px 0 2px;
  background: #ececec;
  border-radius: 2px;
`;

const ZoomSelect = styled(Select)`
  height: 21px;
  padding: 0 9px;
  color: #333;
`;

const Footer = () => (
  <StatusBar>
    <StatusButton aria-label="页面列表">
      <Svg width="30" height="22" viewBox="0 0 30 22" $w={2.600} aria-hidden="true">
        <rect x="7.500" y="4.500" width="16" height="13.500" rx="1" /><path stroke="#808080" strokeWidth="2" d="M3 5 V18 M28 5 V18" />
      </Svg>
    </StatusButton>
    <PageSelectBox $width={143}>
      <Select $plain aria-label="页面"><option>页-1</option></Select>
      <Caret color="#888" />
    </PageSelectBox>
    <StatusRule />
    <PageTab>页-1</PageTab>
    <StatusButton aria-label="新增页面"><Icon w={2.600}><path d="M12 6.500 V17.500 M6.500 12 H17.500" /></Icon></StatusButton>
    <ZoomGroup>
      <StatusButton aria-label="播放"><Icon w={2.300}><circle cx="12" cy="12" r="9.500" /><Solid fill="#777" d="M9 7 L17 12 L9 17.200Z" /></Icon></StatusButton>
      <StatusButton aria-label="缩小"><Icon size={22} w={2.600}><path d="M6 11 H16" /></Icon></StatusButton>
      <ZoomSlider type="range" min={0} max={100} defaultValue={10} aria-label="缩放" />
      <StatusButton aria-label="放大"><Icon size={16} w={2.600}><path d="M7.500 2.500 V13.500 M2 8 H13" /></Icon></StatusButton>
      <ZoomSelectBox $width={62}>
        <ZoomSelect $plain aria-label="缩放比例"><option>55%</option></ZoomSelect>
        <Caret color="#555" />
      </ZoomSelectBox>
      <StatusButton aria-label="全屏"><Icon w={2.600}><path d="M3.500 8 V3.500 H8 M16 3.500 H20.500 V8 M20.500 16 V20.500 H16 M8 20.500 H3.500 V16" /></Icon></StatusButton>
      <StatusButton aria-label="适应宽度"><Icon w={2.500}><rect x="3" y="3" width="18" height="18" /><path strokeWidth="2" d="M7 12 H17 M9 9.500 L6.800 12 L9 14.500 M15 9.500 L17.200 12 L15 14.500" /></Icon></StatusButton>
    </ZoomGroup>
  </StatusBar>
);

export default function App() {
  return (
    <>
      <GlobalStyle />
      <Shell>
        <HeaderBar />
        <Frame>
          <RibbonBar />
          <Main>
            <EditorPane />
            <ToolRail />
            <PropertiesPanel />
          </Main>
          <Footer />
        </Frame>
      </Shell>
    </>
  );
}
